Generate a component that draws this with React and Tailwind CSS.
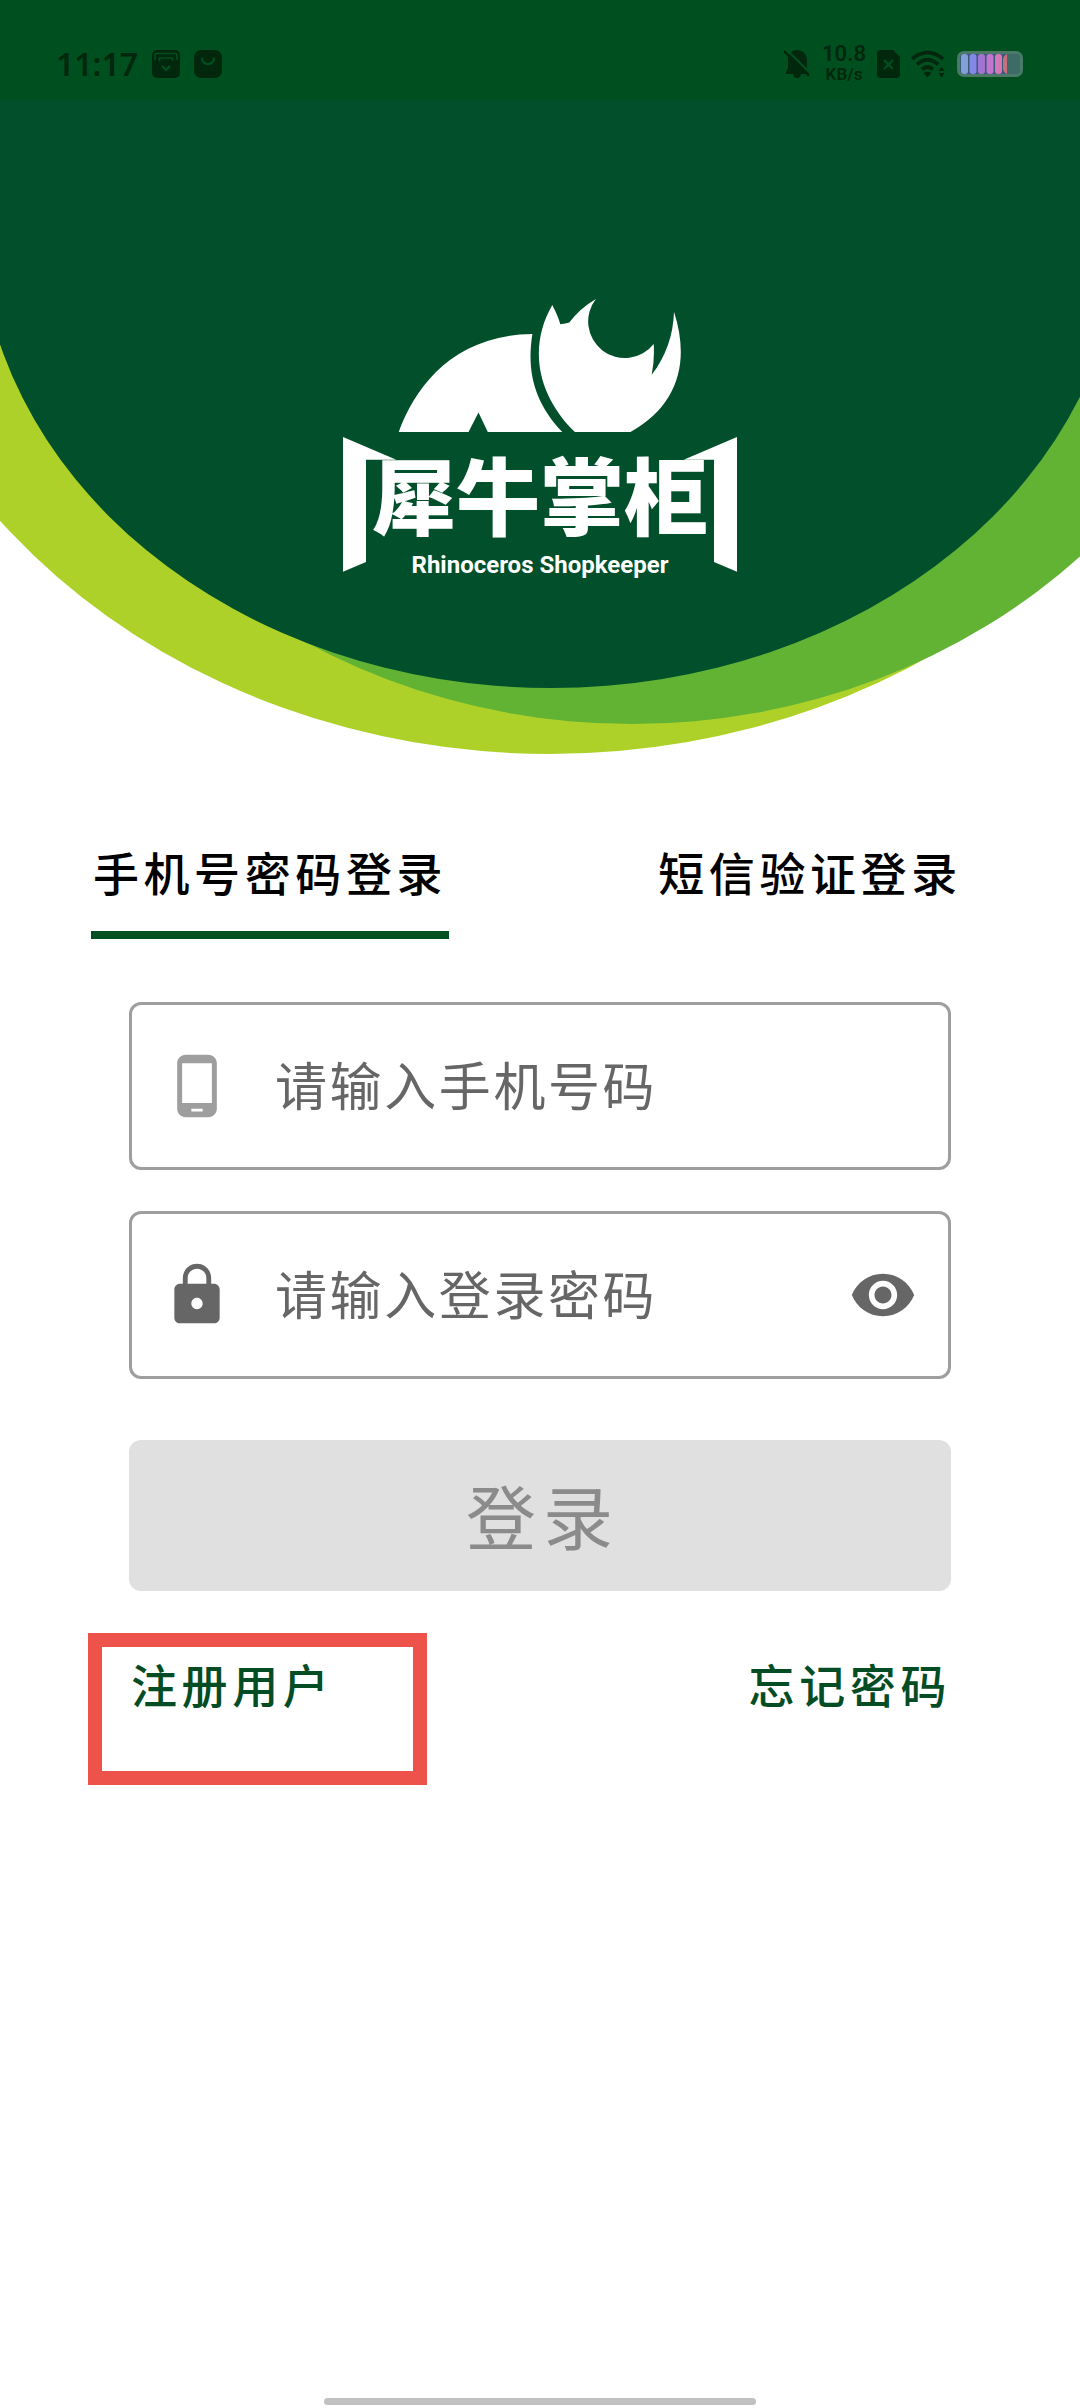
import { useState } from "react";

const PHONE =
  "M16 1H8C6.34 1 5 2.34 5 4v16c0 1.66 1.34 3 3 3h8c1.66 0 3-1.34 3-3V4c0-1.66-1.34-3-3-3zm-2 20h-4v-1h4v1zm3.25-3H6.75V4h10.5v14z";
const LOCK =
  "M18 8h-1V6c0-2.76-2.24-5-5-5S7 3.24 7 6v2H6c-1.1 0-2 .9-2 2v10c0 1.1.9 2 2 2h12c1.1 0 2-.9 2-2V10c0-1.1-.9-2-2-2zm-6 9c-1.1 0-2-.9-2-2s.9-2 2-2 2 .9 2 2-.9 2-2 2zm3.3-9H8.7V6c0-1.82 1.48-3.3 3.3-3.3 1.82 0 3.3 1.48 3.3 3.3v2z";
const EYE =
  "M12 4.5C7 4.5 2.73 7.61 1 12c1.73 4.39 6 7.5 11 7.5s9.27-3.11 11-7.5c-1.73-4.39-6-7.5-11-7.5zM12 17c-2.76 0-5-2.24-5-5s2.24-5 5-5 5 2.24 5 5-2.24 5-5 5zm0-8c-1.66 0-3 1.34-3 3s1.34 3 3 3 3-1.34 3-3-1.34-3-3-3z";

function Icon({ d, className }) {
  return (
    <svg viewBox="0 0 24 24" className={`size-[68px] shrink-0 ${className}`} fill="currentColor" aria-hidden="true">
      <path d={d} />
    </svg>
  );
}

function StatusBar() {
  return (
    <div className="relative flex h-[100px] items-center justify-between bg-[#00501f] pt-7 pr-14 pl-14 text-[#01270d]">
      <div className="flex items-center gap-3.5">
        <span className="font-['Noto_Sans',sans-serif] text-[32px] leading-9 font-semibold">11:17</span>
        <svg viewBox="0 0 28 28" className="size-7" aria-hidden="true">
          <rect width="28" height="28" rx="5" fill="#01270d" />
          <path d="M3 10V5q0-1.500 1.500-1.500h19q1.500 0 1.500 1.500v5M7.500 11V8h13v3" fill="none" stroke="#00501f" strokeWidth="1.600" />
          <path d="M10 16l4 4 4-4" fill="none" stroke="#00501f" strokeWidth="2.200" />
        </svg>
        <svg viewBox="0 0 28 28" className="size-7" aria-hidden="true">
          <rect width="28" height="28" rx="7" fill="#01270d" />
          <path d="M8 8.500a6 5.500 0 0 0 12 0" fill="none" stroke="#00501f" strokeWidth="2.200" strokeLinecap="round" />
        </svg>
      </div>
      <div className="flex items-center gap-[11px]">
        <svg viewBox="0 0 27 30" className="h-[30px] w-[27px]" aria-hidden="true">
          <path d="M13 1c5.500 0 10 4 10 10v8l2.500 4v2H17c0 2.500-2 4-4 4s-4-1.500-4-4H2v-2l2-4v-8C4 5 7.500 1 13 1z" fill="#01270d" />
          <path d="M2 0l25 25" stroke="#00501f" strokeWidth="2" />
          <path d="M0 2l25 25" stroke="#01270d" strokeWidth="2.400" />
        </svg>
        <div className="flex w-11 flex-col items-center font-['Roboto',sans-serif] font-semibold">
          <span className="text-[22px] leading-5">10.8</span>
          <span className="text-[17px] leading-5">KB/s</span>
        </div>
        <svg viewBox="0 0 23 28" className="h-7 w-[23px]" aria-hidden="true">
          <path d="M4 0h12l7 7v17q0 4-4 4H4q-4 0-4-4V4q0-4 4-4z" fill="#01270d" />
          <path d="M7 10l9 9m0-9l-9 9" stroke="#00501f" strokeWidth="2.200" />
        </svg>
        <svg viewBox="0 0 34 28" className="h-7 w-[34px]" fill="none" stroke="#01270d" strokeWidth="3.800" aria-hidden="true">
          <path d="M1 9Q16.500-4 32 9" />
          <path d="M6 14.500Q16.500 5 27 14.500" />
          <path d="M11 19.500Q16.500 14.500 22 19.500" />
          <path d="M12.500 23q4-3 8 0l-4 4.500zM27.500 21l3-4.500 3 4.500zM27.500 23l3 4.500 3-4.500z" fill="#01270d" stroke="none" />
        </svg>
        <svg viewBox="0 0 68 28" className="h-7 w-[68px]" aria-hidden="true">
          <rect x="1" y="1" width="66" height="26" rx="7" fill="#4b7a68" />
          <rect x="4" y="4" width="60" height="20" rx="4" fill="#3b5a7a" />
          <path d="M51 4h9q4 0 4 4v12q0 4-4 4h-9z" fill="#3d6b66" />
          <rect x="5" y="4" width="7" height="20" rx="3" fill="#81a0d6" />
          <rect x="13.500" y="4" width="7" height="20" rx="3" fill="#8588e6" />
          <rect x="22" y="4" width="7" height="20" rx="3" fill="#a274d2" />
          <rect x="30.500" y="4" width="7" height="20" rx="3" fill="#c175ce" />
          <rect x="39" y="4" width="7" height="20" rx="3" fill="#d377b5" />
          <path d="M51 4q-4 2-4 6v8q0 4 4 6z" fill="#c86f7c" />
        </svg>
      </div>
    </div>
  );
}

function Logo() {
  return (
    <div className="relative mt-[199px] flex flex-col items-center gap-[5px] text-white">
      <svg viewBox="231 57 858 400" className="h-[133px] w-[286px]" fill="currentColor" aria-hidden="true">
        <path d="M235 457C285 320 400 165 637 162C620 270 640 365 727 457H503L475 398L445 457Z" />
        <path d="M697 75Q716 112 721 133Q738 132 748 128Q780 85 828 57A110 110 0 1 0 1002 192Q1005 240 996 285Q1060 200 1063 95C1110 240 1080 375 932 457H765C655 350 622 205 697 75Z" />
      </svg>
      <div className="flex items-start">
        <svg viewBox="0 0 69 405" className="h-[135px] w-[23px] overflow-visible" fill="currentColor" aria-hidden="true">
          <path d="M0 0L160 68H69V375L0 404Z" />
        </svg>
        <div className="flex w-[348px] flex-col items-center pt-2.5">
          <h1 className="text-[84px] leading-[92px] font-black whitespace-nowrap">犀牛掌柜</h1>
          <p className="mt-3 font-['Roboto',sans-serif] text-[24px] leading-7 font-bold whitespace-nowrap">
            Rhinoceros Shopkeeper
          </p>
        </div>
        <svg viewBox="0 0 69 405" className="h-[135px] w-[23px] overflow-visible" fill="currentColor" aria-hidden="true">
          <path d="M69 0L-91 68H0V375L69 404Z" />
        </svg>
      </div>
    </div>
  );
}

function Tab({ label, selected, onClick }) {
  return (
    <button
      type="button"
      role="tab"
      aria-selected={selected}
      onClick={onClick}
      className={`justify-self-center border-b-8 px-0.5 pb-[31px] text-[46px] leading-[58px] font-medium tracking-widest whitespace-nowrap text-black ${
        selected ? "border-[#034f24]" : "border-transparent"
      }`}
    >
      {label}
    </button>
  );
}

function Field({ id, label, type, icon, iconClass, children }) {
  return (
    <div className="flex h-[168px] items-center rounded-xl border-3 border-[#9e9e9e] px-[31px]">
      <label htmlFor={id} aria-label={label} className="mr-11">
        <Icon d={icon} className={iconClass} />
      </label>
      <input
        id={id}
        type={type}
        placeholder={label}
        className="h-20 min-w-0 flex-1 bg-transparent pb-1.5 text-[52px] tracking-wider text-[#333] outline-none placeholder:text-[#666]"
      />
      {children}
    </div>
  );
}

export default function App() {
  const [tab, setTab] = useState("password");
  const [visible, setVisible] = useState(false);
  return (
    <div className="flex min-h-screen flex-col bg-white font-['Noto_Sans_CJK_SC',sans-serif]">
      <header className="relative h-[770px]">
        <svg viewBox="0 0 1080 770" preserveAspectRatio="none" className="absolute inset-0 size-full" aria-hidden="true">
          <ellipse cx="550" cy="147" rx="698" ry="607" fill="#aed12a" />
          <ellipse cx="632" cy="140" rx="639" ry="584" fill="#62b334" />
          <ellipse cx="551" cy="218" rx="572" ry="470" fill="#01502b" />
          <rect width="1080" height="218" fill="#01502b" />
        </svg>
        <StatusBar />
        <Logo />
      </header>

      <main>
        <div role="tablist" className="mt-[72px] grid grid-cols-2">
          <Tab label="手机号密码登录" selected={tab === "password"} onClick={() => setTab("password")} />
          <Tab label="短信验证登录" selected={tab === "sms"} onClick={() => setTab("sms")} />
        </div>

        <form className="mt-[63px] flex flex-col px-[129px]" onSubmit={(e) => e.preventDefault()}>
          <div className="flex flex-col gap-[41px]">
            <Field id="phone" label="请输入手机号码" type="tel" icon={PHONE} iconClass="text-[#9e9e9e]" />
            <Field
              id="password"
              label="请输入登录密码"
              type={visible ? "text" : "password"}
              icon={LOCK}
              iconClass="text-[#666]"
            >
              <button type="button" aria-label="显示密码" onClick={() => setVisible(!visible)}>
                <Icon d={EYE} className="text-[#666]" />
              </button>
            </Field>
          </div>
          <button
            type="submit"
            disabled
            className="mt-[61px] h-[151px] rounded-xl bg-[#e0e0e0] pb-0.5 pl-1.5 text-[70px] leading-none font-normal tracking-widest text-[#8b8b8b]"
          >
            登录
          </button>
          <div className="mt-[63px] flex justify-between text-[46px] leading-[58px] font-medium tracking-widest text-[#044d24]">
            <div className="relative pl-0.5">
              <a href="#register">注册用户</a>
              <span className="pointer-events-none absolute -top-[21px] -left-[41px] h-[152px] w-[339px] border-14 border-[#ee534b]" />
            </div>
            <a href="#forgot">忘记密码</a>
          </div>
        </form>
      </main>

      <div className="mx-auto mt-auto mb-[3px] h-[7px] w-2/5 rounded-full bg-[#c1c1c1]" />
    </div>
  );
}
